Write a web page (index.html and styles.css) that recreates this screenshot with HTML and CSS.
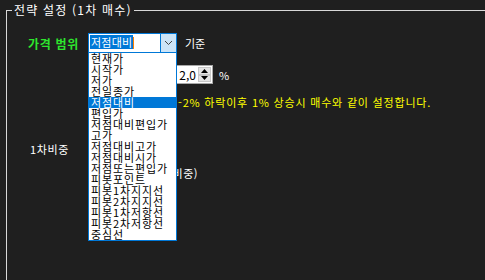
FILE: index.html
```html
<!DOCTYPE html>
<html lang="ko">
<head>
    <meta charset="UTF-8">
    <title>전략 설정</title>
    <link rel="stylesheet" href="styles.css">
</head>
<body>
<fieldset class="group">
    <legend>전략 설정 (1차 매수)</legend>

    <div class="row row-range">
        <span class="label-green">가격 범위</span>
        <div class="combo">
            <div class="combo-text"><span class="sel">저점대비</span><span class="caret"></span></div>
            <div class="combo-btn">
                <svg width="9" height="6" viewBox="0 0 9 6"><path d="M1 1 L4.5 4.5 L8 1" fill="none" stroke="#444" stroke-width="1"/></svg>
            </div>
            <ul class="droplist">
                <li>현재가</li>
                <li>시작가</li>
                <li>저가</li>
                <li>전일종가</li>
                <li class="cur">저점대비</li>
                <li>편입가</li>
                <li>저점대비편입가</li>
                <li>고가</li>
                <li>저점대비고가</li>
                <li>저점대비시가</li>
                <li>저점또는편입가</li>
                <li>피봇포인트</li>
                <li>피봇1차지지선</li>
                <li>피봇2차지지선</li>
                <li>피봇1차저항선</li>
                <li>피봇2차저항선</li>
                <li>중심선</li>
            </ul>
        </div>
        <span class="txt">기준</span>
    </div>

    <div class="row row-pct">
        <div class="spin">
            <span class="spin-val">2,0</span>
            <div class="spin-btns">
                <div class="spin-b"><svg width="7" height="4" viewBox="0 0 7 4"><path d="M0 4 L3.5 0 L7 4 Z" fill="#000"/></svg></div>
                <div class="spin-b"><svg width="7" height="4" viewBox="0 0 7 4"><path d="M0 0 L3.5 4 L7 0 Z" fill="#000"/></svg></div>
            </div>
        </div>
        <span class="txt">%</span>
    </div>

    <div class="row row-note">-2% 하락이후 1% 상승시 매수와 같이 설정합니다.</div>

    <div class="row row-ratio">1차비중</div>

    <div class="row row-ratio2">(1차 비중)</div>
</fieldset>
</body>
</html>
```

FILE: styles.css
```css
*{
    margin:0;
    padding:0;
    box-sizing:border-box;
}
ul,ol{
    list-style:none;
}
body{
    background:#1f1f1f;
    color:#fff;
    font-family:"Noto Sans CJK KR","Liberation Sans",sans-serif;
    font-size:11px;
    width:485px;
    height:280px;
    overflow:hidden;
}
.group{
    margin:3px 0 0 6px;
    width:479px;
    height:277px;
    border:1px solid #d8d8d8;
    border-right:none;
    border-bottom:none;
}
.group legend{
    margin-left:5px;
    padding:0 2px;
    font-size:12px;
    line-height:14px;
    letter-spacing:1.2px;
}
.row{
    display:flex;
    align-items:center;
}
.row-range{
    margin-top:16px;
    height:20px;
    padding-left:21px;
}
.label-green{
    width:60px;
    color:#2ee52e;
    font-weight:bold;
    font-size:12px;
    letter-spacing:0.7px;
}
.combo{
    position:relative;
    width:89px;
    height:20px;
    border:1px solid #0078d7;
    background:#fff;
    display:flex;
}
.combo-text{
    flex:1;
    padding:1px 0 0 1px;
    display:flex;
    align-items:flex-start;
}
.combo-text .sel{
    background:#0078d7;
    color:#fff;
    height:14px;
    line-height:14px;
    padding:0 1px;
    white-space:nowrap;
    letter-spacing:0.2px;
}
.combo-text .caret{
    width:1px;
    height:12px;
    margin-top:2px;
    background:#ff8000;
}
.combo-btn{
    width:16px;
    background:#cce4f7;
    border-left:1px solid #0078d7;
    display:flex;
    align-items:center;
    justify-content:center;
}
.droplist{
    position:absolute;
    left:-1px;
    top:18px;
    width:89px;
    height:189px;
    background:#fff;
    border:1px solid #0078d7;
    color:#000;
    z-index:2;
}
.droplist li{
    height:11px;
    line-height:11px;
    padding-left:2px;
    white-space:nowrap;
    letter-spacing:0.9px;
}
.droplist li.cur{
    background:#0078d7;
    color:#fff;
}
.txt{
    margin-left:8px;
}
.row-pct{
    margin-top:12px;
    height:19px;
    padding-left:165px;
}
.spin{
    width:41px;
    height:19px;
    background:#fff;
    border:1px solid #a8a8a8;
    display:flex;
    color:#000;
}
.spin-val{
    flex:1;
    text-align:right;
    padding-right:2px;
    line-height:17px;
    font-size:12px;
}
.spin-btns{
    width:14px;
    display:flex;
    flex-direction:column;
    padding:1px 1px 1px 0;
}
.spin-b{
    flex:1;
    background:#e5e5e5;
    border:1px solid #c8c8c8;
    display:flex;
    align-items:center;
    justify-content:center;
}
.row-pct .txt{
    margin-left:6px;
}
.row-note{
    margin-top:11px;
    line-height:14px;
    padding-left:171px;
    color:#ffff00;
    letter-spacing:0.8px;
}
.row-ratio{
    margin-top:33px;
    line-height:14px;
    padding-left:23px;
    letter-spacing:0.6px;
}
.row-ratio2{
    margin-top:10px;
    line-height:14px;
    padding-left:140px;
    letter-spacing:0.6px;
}
```
